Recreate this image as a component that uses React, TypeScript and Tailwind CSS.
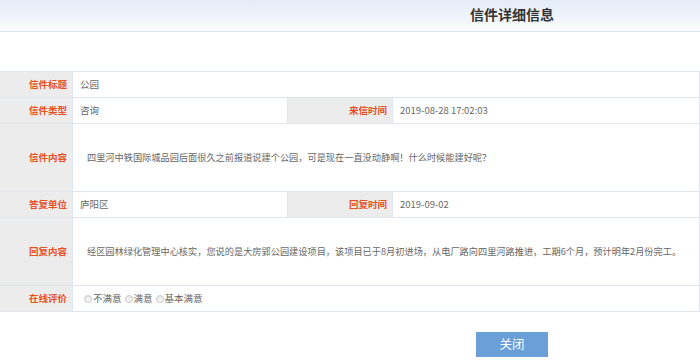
import React from "react";

const font = { fontFamily: '"Noto Sans CJK SC", "Liberation Sans", sans-serif' };

function Label({ children, tall }: { children: React.ReactNode; tall?: boolean }) {
  return (
    <div
      className={`flex items-center justify-end pr-[5px] bg-[#ececec] border-b border-r border-[#dfe6f1] text-[9.5px] font-bold text-[#e8501e] ${
        tall ? "h-[68px]" : "h-[26px]"
      }`}
    >
      {children}
    </div>
  );
}

function Value({ children, span, tall }: { children: React.ReactNode; span?: boolean; tall?: boolean }) {
  return (
    <div
      className={`flex items-center border-b border-r border-[#dfe6f1] text-[#666] whitespace-nowrap ${
        span ? "col-span-3" : ""
      } ${tall ? "h-[68px] pl-[14px] text-[9.2px]" : "h-[26px] pl-[7px] text-[9.5px]"}`}
    >
      {children}
    </div>
  );
}

function Radio({ label }: { label: string }) {
  return (
    <label className="flex items-center">
      <span className="w-[8px] h-[8px] rounded-full border border-[#c9c9c9] bg-gradient-to-b from-[#e6e6e6] to-[#fafafa]" />
      <span className="ml-[1px]">{label}</span>
    </label>
  );
}

export default function App() {
  return (
    <div className="w-[700px] h-[362px] bg-white overflow-hidden" style={font}>
      {/* header */}
      <div className="h-[32px] pb-[3px] bg-gradient-to-b from-[#e3ecf8] to-[#fbfbfb] border-b-[1.5px] border-[#d9e3f1] flex items-center">
        <h1 className="ml-[470px] text-[14px] font-bold text-[#333] leading-none">信件详细信息</h1>
      </div>

      {/* detail table */}
      <div className="mt-[39px] grid grid-cols-[73px_215px_105px_1fr] border-t border-[#dfe6f1]">
        <Label>信件标题</Label>
        <Value span>公园</Value>

        <Label>信件类型</Label>
        <Value>咨询</Value>
        <Label>来信时间</Label>
        <Value>2019-08-28 17:02:03</Value>

        <Label tall>信件内容</Label>
        <Value span tall>
          四里河中铁国际城品园后面很久之前报道说建个公园，可是现在一直没动静啊！什么时候能建好呢？
        </Value>

        <Label>答复单位</Label>
        <Value>庐阳区</Value>
        <Label>回复时间</Label>
        <Value>2019-09-02</Value>

        <Label tall>回复内容</Label>
        <Value span tall>
          经区园林绿化管理中心核实，您说的是大房郢公园建设项目，该项目已于8月初进场，从电厂路向四里河路推进，工期6个月，预计明年2月份完工。
        </Value>

        <Label>在线评价</Label>
        <Value span>
          <div className="flex items-center gap-[3px] ml-[4px]">
            <Radio label="不满意" />
            <Radio label="满意" />
            <Radio label="基本满意" />
          </div>
        </Value>
      </div>

      <div className="mt-[18px] pl-[476px]">
        <button className="w-[72px] h-[25px] bg-[#6a9fd8] text-white text-[12.5px]">关闭</button>
      </div>
    </div>
  );
}
